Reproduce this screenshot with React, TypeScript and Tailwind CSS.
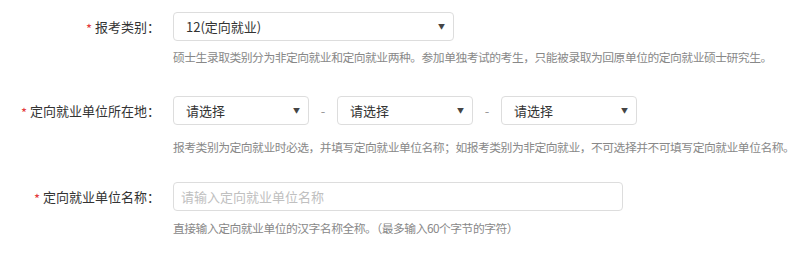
const font = { fontFamily: '"Noto Sans CJK SC", "Noto Sans", sans-serif' };

function Label({ text }: { text: string }) {
  return (
    <div className="w-[160px] shrink-0 flex items-center justify-end h-[29px] text-[13px] text-[#333] whitespace-nowrap">
      <span className="text-[13px] leading-none text-[#e4393c] mr-[3px] translate-y-[2px]">*</span>
      <span>{text}：</span>
    </div>
  );
}

function Select({ value, width }: { value: string; width: string }) {
  return (
    <div
      className={`${width} h-[29px] flex items-center justify-between pl-[12px] pr-[8px] border border-[#ddd] rounded-[4px] bg-white text-[13px] text-[#333]`}
    >
      <span>{value}</span>
      <span className="text-[7px] text-[#444]">▼</span>
    </div>
  );
}

function Help({ children, className = '' }: { children: React.ReactNode; className?: string }) {
  return (
    <div className={`text-[11.8px] tracking-[-0.5px] leading-[16px] text-[#888] whitespace-nowrap ${className}`}>
      {children}
    </div>
  );
}

export default function App() {
  return (
    <div className="w-[798px] h-[256px] bg-white pt-[12px]" style={font}>
      <div className="flex">
        <Label text="报考类别" />
        <div className="ml-[13px]">
          <Select value="12(定向就业)" width="w-[281px]" />
          <Help className="mt-[8px]">
            硕士生录取类别分为非定向就业和定向就业两种。参加单独考试的考生，只能被录取为回原单位的定向就业硕士研究生。
          </Help>
        </div>
      </div>

      <div className="flex mt-[31px]">
        <Label text="定向就业单位所在地" />
        <div className="ml-[13px]">
          <div className="flex items-center">
            <Select value="请选择" width="w-[136px]" />
            <span className="w-[28px] text-center text-[13px] text-[#999]">-</span>
            <Select value="请选择" width="w-[136px]" />
            <span className="w-[28px] text-center text-[13px] text-[#999]">-</span>
            <Select value="请选择" width="w-[136px]" />
          </div>
          <Help className="mt-[14px]">
            报考类别为定向就业时必选，并填写定向就业单位名称；如报考类别为非定向就业，不可选择并不可填写定向就业单位名称。
          </Help>
        </div>
      </div>

      <div className="flex mt-[27px]">
        <Label text="定向就业单位名称" />
        <div className="ml-[13px]">
          <input
            placeholder="请输入定向就业单位名称"
            className="block w-[450px] h-[29px] px-[7px] border border-[#ddd] rounded-[4px] text-[13px] text-[#333] placeholder:text-[#c0c0c0] outline-none"
          />
          <Help className="mt-[9px]">直接输入定向就业单位的汉字名称全称。（最多输入60个字节的字符）</Help>
        </div>
      </div>
    </div>
  );
}
